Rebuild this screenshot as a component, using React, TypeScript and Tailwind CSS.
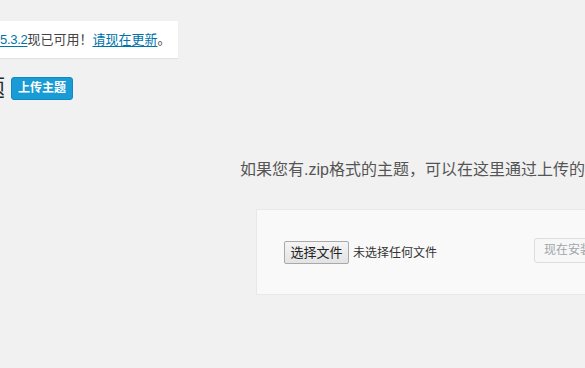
import React from "react";

export default function App() {
  const font = { fontFamily: '"Liberation Sans", "Noto Sans CJK SC", sans-serif' };
  return (
    <div
      className="w-[585px] h-[368px] overflow-hidden bg-[#f1f1f1] relative"
      style={font}
    >
      {/* update notice */}
      <div className="mt-[21px] w-[178px] h-[37px] bg-white shadow-[0_1px_1px_rgba(0,0,0,0.06)] flex items-center pl-0 text-[13px] text-[#444] whitespace-nowrap">
        <a className="text-[#0073aa] underline underline-offset-2 tracking-[-0.3px]">5.3.2</a>
        <span>现已可用！</span>
        <a className="text-[#0073aa] underline underline-offset-2">请现在更新</a>
        <span>。</span>
      </div>

      {/* heading row */}
      <div className="mt-[19px] h-[23px] flex items-center whitespace-nowrap">
        <h1 className="ml-[-18px] text-[23px] leading-[23px] text-[#23282d] font-normal">题</h1>
        <button className="ml-[6px] h-[23px] w-[62px] rounded-[3px] bg-[#199bd6] border border-[#1089c0] text-white text-[12px] font-bold leading-[21px]">
          上传主题
        </button>
      </div>

      {/* help text */}
      <p className="mt-[58px] ml-[240px] text-[16px] leading-[24px] text-[#555] whitespace-nowrap">
        如果您有.zip格式的主题，可以在这里通过上传的方式进行安装或更新。
      </p>

      {/* upload form */}
      <div className="mt-[27px] ml-[256px] w-[400px] h-[86px] bg-[#f9f9f9] border border-[#e8e8e8] flex items-start whitespace-nowrap">
        <div className="mt-[31px] ml-[27px] flex items-center">
          <button className="h-[23px] w-[65px] border border-[#a9a9a9] rounded-[2px] bg-gradient-to-b from-[#f5f5f5] to-[#e3e3e3] text-[13px] text-[#222] leading-[21px]">
            选择文件
          </button>
          <span className="ml-[4px] text-[12px] text-[#333]">未选择任何文件</span>
        </div>
        <button className="mt-[28px] ml-[97px] h-[25px] px-[9px] border border-[#dddddd] rounded-[3px] bg-[#f7f7f7] text-[12px] text-[#a0a5aa] leading-[23px]">
          现在安装
        </button>
      </div>
    </div>
  );
}
